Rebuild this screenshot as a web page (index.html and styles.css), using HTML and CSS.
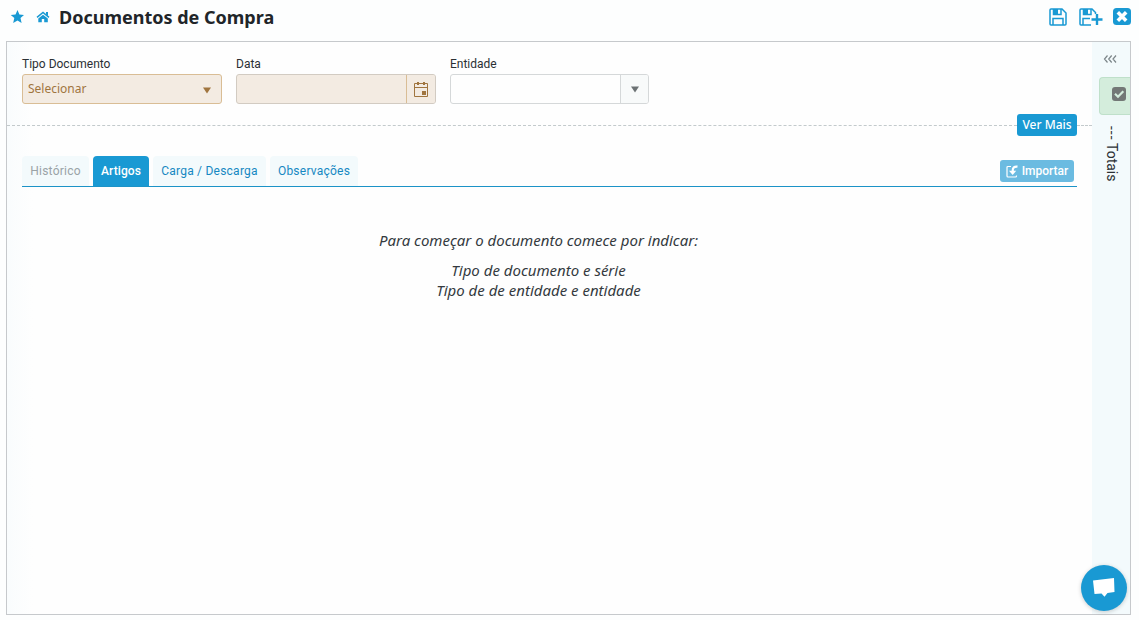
FILE: index.html
```html
<!DOCTYPE html>
<html lang="pt">
<head>
<meta charset="utf-8">
<title>Documentos de Compra</title>
<link rel="stylesheet" href="styles.css">
</head>
<body>
<header class="topbar">
  <svg class="star" width="14" height="14" viewBox="0 0 14 14"><path fill="currentColor" d="M7.5 0 9.4 4.4 14 4.9 10.5 8 11.6 13 7.5 10.5 3.2 13 4.3 8 .8 4.9 5.5 4.4Z"/></svg>
  <svg class="home" width="14" height="12" viewBox="0 0 14 12"><path fill="none" stroke="currentColor" stroke-width="1.5" d="M1 6.4 7 1.4 13 6.4"/><path fill="currentColor" d="M10 1h2v4l-2-1.6ZM7 3.7 11.8 7.6V11.2H8.2V8H5.8v3.2H2.3V7.6Z"/></svg>
  <h1 class="title">Documentos de Compra</h1>
  <div class="actions">
    <svg width="18" height="18" viewBox="0 0 18 18" fill="none" stroke="currentColor" stroke-width="1.5"><path d="M2 1H13L17 5V16Q17 17 16 17H2Q1 17 1 16V2Q1 1 2 1ZM4 17V10.5H14V17"/><path d="M4.5 1V6.5H12V1"/><path fill="currentColor" stroke="none" d="M4.5 1H9V6.5H4.5Z"/></svg>
    <svg width="24" height="18" viewBox="0 0 24 18" fill="none" stroke="currentColor" stroke-width="1.5"><path d="M12 17H2Q1 17 1 16V2Q1 1 2 1H13L16.5 4.5V6M4 17V10.5H11"/><path d="M4.5 1V6.5H12V1"/><path fill="currentColor" stroke="none" d="M4.5 1H9V6.5H4.5Z"/><path stroke-width="2.4" d="M18 6V17M12.5 11.5H23.5"/></svg>
    <svg width="18" height="17" viewBox="0 0 18 17"><rect width="18" height="17" rx="3.5" fill="currentColor"/><path d="M4.8 4.3 13.2 12.7M13.2 4.3 4.8 12.7" stroke="#fff" stroke-width="3.6"/></svg>
  </div>
</header>
<div class="panel">
  <main class="main">
    <div class="fields">
      <div class="field"><label class="label">Tipo Documento</label>
        <div class="input required"><span class="value">Selecionar</span><svg class="arrow" width="8" height="7" viewBox="0 0 8 7"><path fill="currentColor" d="M0 .5H8L4 6.5Z"/></svg></div></div>
      <div class="field"><label class="label">Data</label>
        <div class="input required date"><span class="value"></span><span class="addon"><svg width="14" height="16" viewBox="0 0 14 16" fill="none" stroke="currentColor"><path d="M.5 2.5H13.5V15.5H.5ZM.5 6.5H13.5"/><path stroke-width="2" d="M4 1V4M10 1V4"/><path fill="currentColor" stroke="none" d="M8 10H12V14H8Z"/></svg></span></div></div>
      <div class="field"><label class="label">Entidade</label>
        <div class="input"><span class="value"></span><span class="addon narrow"><svg width="8" height="7" viewBox="0 0 8 7"><path fill="currentColor" d="M0 .5H8L4 6.5Z"/></svg></span></div></div>
    </div>
    <div class="divider"><span class="dash"></span><button class="more">Ver Mais</button><span class="dash end"></span></div>
    <nav class="tabs">
      <span class="tab disabled">Histórico</span>
      <span class="tab active">Artigos</span>
      <span class="tab cargo">Carga / Descarga</span>
      <span class="tab notes">Observações</span>
      <button class="import"><svg width="13" height="13" viewBox="0 0 13 13" fill="none" stroke="currentColor"><path stroke-width="1.2" d="M5 1.5H2Q1 1.5 1 2.5V11Q1 12 2 12H9.5Q10.5 12 10.5 11V10.5"/><path stroke-width="2.2" d="M11.5 1.6Q6.6 1 6.7 6"/><path fill="currentColor" stroke="none" d="M3 5.8H10.2L6.7 10Z"/></svg><span class="import-text">Importar</span></button>
    </nav>
    <section class="hint">
      <p class="hint-lead">Para começar o documento comece por indicar:</p>
      <p class="hint-list">Tipo de documento e série<br>Tipo de de entidade e entidade</p>
    </section>
  </main>
  <aside class="side">
    <svg class="collapse" width="14" height="8" viewBox="0 0 14 8" fill="none" stroke="currentColor" stroke-width="1.2"><path d="M4.5.5 1.5 4 4.5 7.5M8.7.5 5.7 4 8.7 7.5M13 .5 10 4 13 7.5"/></svg>
    <div class="check"><svg width="14" height="14" viewBox="0 0 14 14"><rect width="14" height="14" rx="3" fill="#737876"/><path d="M3 6.8 6 9.8 11.3 4.3" fill="none" stroke="#d4eddc" stroke-width="2.2"/></svg></div>
    <div class="totals"><span class="totals-mark">---</span><span>Totais</span></div>
  </aside>
</div>
<button class="chat"><svg width="22" height="20" viewBox="0 0 22 20"><path fill="#fff" d="M0 2.5 21 0 21.5 14 14.5 15 11.5 18.8 8.5 15.5 1.5 16Z"/></svg></button>
</body>
</html>
```

FILE: styles.css
```css
* { box-sizing: border-box; }
body { margin: 0; height: 620px; overflow: hidden; background: #fdfefe; color: #2b3034; font: 12px Roboto, sans-serif; }
button { border: 0; font: inherit; color: #fff; padding: 0; }
svg { display: block; flex: none; }
.topbar { height: 41px; display: flex; align-items: flex-start; padding: 0 8px 0 10px; color: #1999d3; }
.star { margin-top: 10px; }
.home { margin: 11px 0 0 12px; }
.title { margin: 5px 0 0 9px; font: bold 18px/25px "Noto Sans", sans-serif; color: #212529; white-space: nowrap; }
.actions { margin: 8px 0 0 auto; display: flex; gap: 12px; }
.actions svg:nth-child(2) { margin-right: -2px; }
.panel { margin: 0 8px 0 6px; height: 574px; border: 1px solid #c6c9cc; display: flex; }
.main { width: 1085px; flex: none; padding: 14px 15px 0; background: linear-gradient(90deg, #f9fcfd, #fefefe 26px); }
.fields { display: flex; gap: 14px; }
.field { width: 200px; }
.field:last-child { width: 199px; }
.label { display: block; height: 18px; line-height: 16px; white-space: nowrap; }
.input { height: 30px; border: 1px solid #d5d8d9; border-radius: 3px; background: #fefefe; display: flex; align-items: stretch; color: #6c7274; }
.required { background: #f3ebe2; border-color: #d9bd95; color: #a0753f; }
.date { border-color: #d2cbc2; }
.value { flex: 1; padding-left: 5px; font: 12px/28px "Noto Sans", sans-serif; }
.arrow { margin: 12px 10px 0 0; }
.addon { width: 29px; border-left: 1px solid #d5d8d9; display: flex; align-items: center; justify-content: center; background: #f8fafa; border-radius: 0 2px 2px 0; }
.narrow { width: 28px; padding-top: 1px; }
.required .addon { background: #f3ebe2; border-color: #d9bd95; }
.divider { display: flex; align-items: center; height: 22px; margin: 10px -15px 0; }
.dash { flex: 1; border-top: 1px dashed #c3cacc; }
.end { flex: 0 0 15px; }
.more { width: 60px; height: 22px; border-radius: 3px; background: #1999d3; font: 500 12px/22px "Noto Sans", sans-serif; }
.tabs { display: flex; gap: 4px; height: 31px; margin-top: 20px; border-bottom: 1px solid #1c93c7; }
.tab { height: 30px; border-radius: 4px 4px 0 0; background: #f3fafc; color: #1688c2; line-height: 30px; text-align: center; letter-spacing: .23px; white-space: nowrap; width: 56px; }
.disabled { width: 67px; color: #9aa3a7; }
.active { background: #1999d3; color: #fff; font-weight: 500; letter-spacing: .1px; }
.cargo { width: 113px; }
.notes { width: 88px; }
.import { width: 74px; height: 22px; margin: 4px 3px 0 auto; border-radius: 3px; background: #6bbbe1; display: flex; align-items: center; justify-content: center; gap: 3px; font-weight: 500; }
.hint { margin-top: 43px; padding-right: 22px; text-align: center; font: italic 15px/20px "Noto Sans", sans-serif; color: #343a3e; }
.hint p { margin: 0 0 10px; }
.side { flex: 1; background: #f3fafc; display: flex; flex-direction: column; }
.collapse { margin: 13px 0 0 11px; color: #7c8589; }
.check { margin: 14px 0 0 7px; height: 38px; border: 1px solid #bfe0ca; border-right: 0; border-radius: 4px 0 0 4px; background: #d4eddc; padding: 9px 0 0 12px; }
.totals { writing-mode: vertical-rl; align-self: flex-start; font-size: 14px; line-height: 20px; margin: 11px 0 0 10px; display: flex; gap: 2px; }
.totals-mark { letter-spacing: 1px; }
.chat { position: absolute; left: 1081px; top: 565px; width: 46px; height: 46px; border-radius: 50%; background: #1999d3; display: flex; align-items: center; justify-content: center; box-shadow: 0 1px 4px #0003; }
```
